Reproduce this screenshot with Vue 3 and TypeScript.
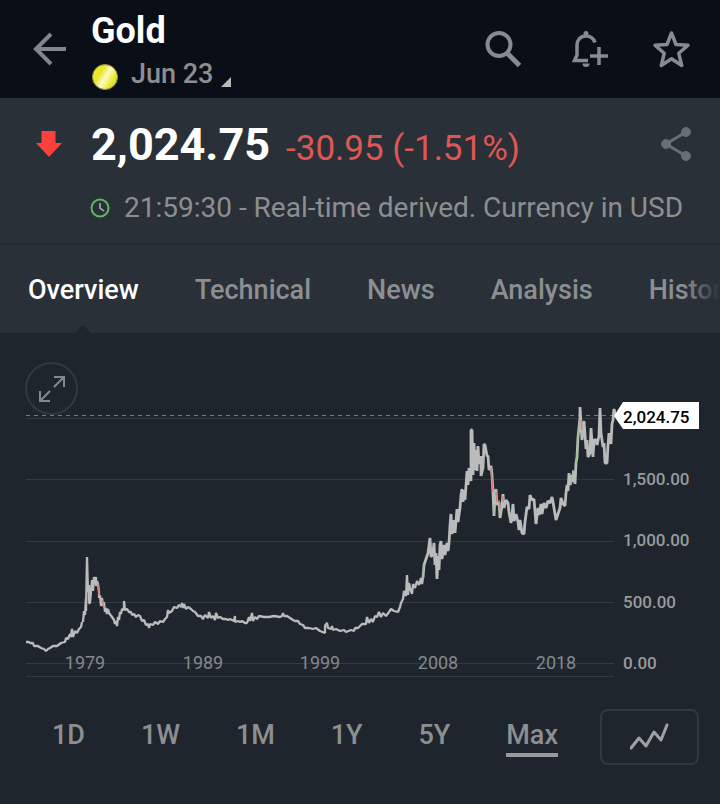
<script setup lang="ts">
import { ref } from 'vue'

const tabs = ['Overview', 'Technical', 'News', 'Analysis', 'Historical']
const activeTab = ref('Overview')

const ranges = ['1D', '1W', '1M', '1Y', '5Y', 'Max']
const activeRange = ref('Max')

const gridLines = [418, 479, 541, 602, 663, 676]
const priceLabels = [
  { y: 485, text: '1,500.00' },
  { y: 546, text: '1,000.00' },
  { y: 608, text: '500.00' },
  { y: 669, text: '0.00' },
]
const yearLabels = [
  { x: 85, text: '1979' },
  { x: 203, text: '1989' },
  { x: 320, text: '1999' },
  { x: 438, text: '2008' },
  { x: 556, text: '2018' },
]

const earlyPrices =
  '26,642 29,642 30,643 33,643 34,646 38,646 41,648 44,649 46,651 48,649 50,648 53,646 57,646 61,643 65,642 66,638 68,639 70,634 71,637 72,629 73,637 75,631 77,633 79,629 81,627 82,622'
const spikePrices =
  '83,622 84,611 85,615 86,598 86,611 87,557 88,592 89,585 89,603 90,603 92,580 93,591 94,577 95,584 96,577 96,586 97,581 98,584 99,592 99,598 100,595 101,606 102,598 103,606 104,602 105,612 106,608 107,614 108,609 109,613 112,617 114,620 115,624 116,621 117,626 118,617 119,620 120,612 121,614 122,609 124,610 124,601 125,610 127,609 129,612 131,612 132,615 134,614 136,617 138,615 140,616 142,621 144,620 146,625 148,624 149,628 150,624 153,625 155,622 158,624 160,621 163,622 165,619 167,617 168,610 169,613 172,611 174,607 177,608 179,605 181,607 182,603 183,608 184,604 186,609 188,607 191,609 193,611 195,612 198,616 201,616 203,619 205,615 208,618 209,612 211,618 213,616 215,620 216,613 218,618 220,617 223,619 226,619 228,620 230,619 234,621 235,616 235,622 238,621 240,622 242,621 245,623 247,623 249,617 250,621 252,613 253,621 255,617 257,619 259,616 264,617 269,617 274,616 280,617 282,616 283,613 284,616 287,616 290,618 293,620 295,621 298,621 300,624 303,625 305,628 309,628 313,629 316,628 320,631 325,633 325,626 327,623 328,628 331,629 332,626 333,630 336,629 340,631 344,630 346,632 351,630 354,631 355,628 358,628 362,624 366,624 367,617 369,623 371,619 373,622 375,616 377,617 379,612 381,617 383,613 386,616 389,612 391,609 394,611 398,612 400,607 401,603 403,599 404,591 406,596 407,575 408,595 409,583 410,588 412,594 413,584 415,588 417,581 419,585 421,578 422,584 423,578'
const latePrices =
  '423,578 424,565 426,559 428,553 430,538 431,557 433,553 434,543 435,565 436,553 437,579 438,556 439,570 440,545 441,541 442,559 444,545 445,555 447,543 448,551 449,543 450,525 451,514 452,534 454,520 455,533 457,509 458,522 460,508 461,495 462,489 463,502 464,490 465,500 467,471 468,485 469,468 471,481 471,430 472,430 473,475 474,443 475,470 476,450 477,471 478,446 479,464 481,456 481,476 483,468 484,444 485,445 487,456 488,456 489,470 491,466 492,475 493,493 494,516 495,494 496,489 497,505 499,502 500,518 502,506 503,494 504,508 506,500 508,503 509,512 511,523 512,515 513,504 514,521 516,514 518,522 519,530 520,520 522,533 524,534 525,522 527,507 529,509 530,495 532,500 534,499 536,524 538,508 539,515 541,504 542,514 544,503 546,508 548,501 550,503 552,497 553,502 555,514 556,520 558,514 560,508 561,498 563,504 565,506 566,493 567,485 568,491 569,473 570,485 571,475 572,482 574,471 575,484 576,463 577,457 578,437 580,418 580,407 581,424 582,440 583,430 584,421 586,449 587,440 588,457 590,453 591,428 592,442 593,457 594,440 596,440 597,445 599,436 600,408 601,433 603,447 604,443 605,463 607,463 608,445 609,433 611,444 612,424 613,420 614,409 616,417'
const risePoints = ['423,578 424,565', '494,504 494,514', '500,508 500,516', '571,485 573,470', '576,465 578,440 580,420']
const fallPoints = ['98,584 99,596', '102,600 104,608', '491,468 493,492', '496,491 497,502', '499,500 500,509', '503,496 503,502', '581,420 582,430']
</script>

<template>
  <div class="screen">
    <header class="topbar">
      <button class="icon-button back" type="button" aria-label="Back">
        <svg width="36" height="36" viewBox="0 0 36 36" fill="none" stroke="#80868d" stroke-width="4">
          <path d="M34 18H4M19 3 4 18l15 15" />
        </svg>
      </button>
      <div class="title">
        <h1>Gold</h1>
        <button class="contract" type="button">
          <svg width="28" height="28" viewBox="0 0 28 28">
            <defs>
              <linearGradient id="coin" x1="0" y1="0.2" x2="1" y2="0.8">
                <stop offset="0" stop-color="#f0ec2a" />
                <stop offset="0.3" stop-color="#e8e52c" />
                <stop offset="0.52" stop-color="#fcfbc8" />
                <stop offset="0.75" stop-color="#eeec3a" />
                <stop offset="1" stop-color="#cfca28" />
              </linearGradient>
            </defs>
            <circle cx="14" cy="14" r="12.5" fill="url(#coin)" stroke="#8d8d52" />
          </svg>
          <span>Jun 23</span>
          <svg class="corner" width="12" height="12" viewBox="0 0 12 12"><path d="M11 1v10H1z" fill="#b9bab9" /></svg>
        </button>
      </div>
      <nav class="actions">
        <button class="icon-button" type="button" aria-label="Search">
          <svg width="40" height="40" viewBox="0 0 40 40" fill="none" stroke="#868b92" stroke-width="4">
            <circle cx="15" cy="15.500" r="11.500" />
            <path d="M23.500 24.500l12 12" stroke-width="5" />
          </svg>
        </button>
        <button class="icon-button" type="button" aria-label="Create alert">
          <svg width="40" height="40" viewBox="0 0 40 40" fill="none" stroke="#868b92" stroke-width="3.500">
            <path d="M27 13.500c-1.500-4-5-6.500-9-6.500-5.500 0-9 4-9 9v10l-2.500 5.500H20" />
            <circle cx="18" cy="4.500" r="2.500" fill="#868b92" stroke="none" />
            <path d="M14.500 34.500h7a3.500 3.500 0 0 1-7 0z" fill="#868b92" stroke="none" />
            <path d="M31 18v18M22 27h18" />
          </svg>
        </button>
        <button class="icon-button" type="button" aria-label="Add to watchlist">
          <svg width="40" height="40" viewBox="0 0 40 40" fill="none" stroke="#868b92" stroke-width="3.500" stroke-linejoin="round">
            <path d="M19.500 4l4.500 11.500 12 .800-9.200 8 2.900 12.200L19.500 29.800 9.300 36.500l2.900-12.200-9.200-8 12-.800z" />
          </svg>
        </button>
      </nav>
    </header>

    <section class="quote">
      <svg class="direction" width="28" height="28" viewBox="0 0 28 28"><path d="M6.500 1h14v12H27L14 27 1 13h5.500z" fill="#fb413d" /></svg>
      <div class="price-row">
        <strong class="price">2,024.75</strong>
        <span class="change">-30.95 (-1.51%)</span>
      </div>
      <button class="icon-button share" type="button" aria-label="Share">
        <svg width="32" height="36" viewBox="0 0 32 36" fill="#676e75" stroke="#676e75">
          <path d="M26 6 6 18l20 12" fill="none" stroke-width="3" />
          <circle cx="26" cy="6" r="4.500" /><circle cx="6" cy="18" r="4.500" /><circle cx="26" cy="30" r="4.500" />
        </svg>
      </button>
      <p class="status">
        <svg width="20" height="20" viewBox="0 0 20 20" fill="none">
          <circle cx="10" cy="10" r="8.500" stroke="#5cb85c" stroke-width="2" />
          <path d="M10 5v5l4 3" stroke="#b5b0bd" stroke-width="1.500" />
        </svg>
        <span>21:59:30 - Real-time derived. Currency in USD</span>
      </p>
    </section>

    <nav class="tabs">
      <button
        v-for="tab in tabs"
        :key="tab"
        type="button"
        :class="{ active: tab === activeTab }"
        @click="activeTab = tab"
      >{{ tab }}</button>
    </nav>

    <main>
      <section class="chart">
        <button class="expand" type="button" aria-label="Expand chart">
          <svg width="28" height="28" viewBox="0 0 28 28" fill="none" stroke="#85898a" stroke-width="2">
            <path d="M16 2h10v10M26 2 16 12M2 16v10h10M2 26l10-10" />
          </svg>
        </button>
        <svg class="plot" viewBox="0 333 720 352" role="img" aria-label="Gold price history">
          <path v-for="y in gridLines" :key="y" class="grid" :d="`M26 ${y}.5H614`" />
          <path class="current" d="M26 415.500H614" />
          <text v-for="label in yearLabels" :key="label.text" class="year" :x="label.x" y="669">{{ label.text }}</text>
          <polyline class="series" :points="earlyPrices" />
          <polyline class="series" :points="spikePrices" />
          <polyline class="series thick" :points="latePrices" />
          <polyline v-for="points in risePoints" :key="points" class="rise" :points="points" />
          <polyline v-for="points in fallPoints" :key="points" class="fall" :points="points" />
          <text v-for="label in priceLabels" :key="label.text" class="value" x="623" :y="label.y">{{ label.text }}</text>
          <path d="M614 416l9-14h76v27h-76z" fill="#fff" />
          <text class="value last" x="623" y="423">2,024.75</text>
        </svg>
      </section>

      <section class="ranges">
        <div class="range-list">
          <button
            v-for="range in ranges"
            :key="range"
            type="button"
            :class="{ active: range === activeRange }"
            @click="activeRange = range"
          >{{ range }}</button>
        </div>
        <button class="chart-type" type="button" aria-label="Chart type">
          <svg width="40" height="28" viewBox="0 0 40 28" fill="none" stroke="#a0a2a2" stroke-width="3" stroke-linecap="round" stroke-linejoin="round">
            <path d="M1 25l8-10 7 8 8-14 7 8L37 2" />
          </svg>
        </button>
      </section>
    </main>
  </div>
</template>

<style>
body {
  background: #1e252c;
}
</style>

<style scoped>
.screen {
  min-height: 100vh;
  overflow: hidden;
  background: #1e252c;
  color: #8c8f90;
  font-family: Roboto, sans-serif;
}

button {
  padding: 0;
  border: 0;
  background: none;
  color: inherit;
  font: inherit;
  cursor: pointer;
}

svg {
  display: block;
  flex: none;
}

.topbar {
  display: flex;
  align-items: center;
  height: 98px;
  padding: 0 28px 0 32px;
  background: #0a0e16;
}

.back {
  width: 59px;
}

.title {
  flex: 1;
  padding-top: 6px;
}

h1 {
  margin: 0 0 4px;
  color: #fff;
  font-size: 36px;
  font-weight: 700;
  line-height: 46px;
}

.contract {
  display: flex;
  align-items: center;
  gap: 12px;
  font-size: 27px;
  font-weight: 500;
  line-height: 44px;
}

.contract span {
  margin-top: -6px;
}

.corner {
  align-self: flex-end;
  margin: 0 0 8px -5px;
}

.actions {
  display: flex;
  gap: 44px;
}

.quote {
  display: grid;
  grid-template-columns: 59px 1fr auto;
  align-items: center;
  padding: 17px 28px 15px 32px;
  border-bottom: 2px solid #20272e;
  background: #2a3038;
}

.direction {
  margin-left: 3px;
}

.direction,
.share {
  margin-bottom: 6px;
}

.price-row {
  display: flex;
  align-items: baseline;
  gap: 16px;
  line-height: 60px;
  white-space: nowrap;
}

.price {
  color: #fff;
  font-size: 45px;
  font-weight: 700;
}

.change {
  color: #df5753;
  font-size: 35px;
}

.status {
  grid-column: 2 / 4;
  display: flex;
  align-items: center;
  gap: 14px;
  margin: 9px 0 0 -1px;
  font-size: 28px;
  line-height: 40px;
  white-space: nowrap;
}

.tabs {
  position: relative;
  display: flex;
  gap: 56px;
  padding: 2px 0 0 28px;
  overflow: hidden;
  background: #2a3038;
  font-size: 27px;
  font-weight: 500;
  line-height: 86px;
  white-space: nowrap;
}

.tabs::after {
  content: '';
  position: absolute;
  inset: 0 0 0 auto;
  width: 36px;
  background: linear-gradient(to right, #2a303800, #2a3038);
}

.tabs button {
  flex: none;
  position: relative;
}

.tabs .active {
  color: #fff;
}

.tabs .active::after {
  content: '';
  position: absolute;
  bottom: 0;
  left: 50%;
  margin-left: -8px;
  border: 8px solid transparent;
  border-top: 0;
  border-bottom-color: #1e252c;
}

.chart {
  position: relative;
}

.expand {
  position: absolute;
  top: 29px;
  left: 25px;
  display: grid;
  place-items: center;
  width: 53px;
  height: 53px;
  border: 2px solid #333940;
  border-radius: 50%;
}

.plot {
  width: 100%;
}

.grid {
  stroke: #2e3b42;
}

.current {
  stroke: #747b7e;
  stroke-dasharray: 4 4;
}

.series {
  fill: none;
  stroke: #babbbb;
  stroke-width: 2.3;
  stroke-linejoin: bevel;
}

.thick {
  stroke-width: 2.8;
}

.rise,
.fall {
  fill: none;
  stroke: #96c48f;
  stroke-width: 1.3;
}

.fall {
  stroke: #dc7777;
}

.year,
.value {
  fill: #858a8c;
  font-size: 18px;
}

.year {
  text-anchor: middle;
}

.value {
  fill: #979b9c;
  font-size: 17px;
  font-weight: 500;
}

.last {
  fill: #000;
}

.ranges {
  display: flex;
  align-items: center;
  padding: 24px 21px 40px 52px;
}

.range-list {
  flex: 1;
  display: flex;
  justify-content: space-between;
  margin-right: 42px;
  font-size: 27px;
  font-weight: 500;
  line-height: 36px;
}

.range-list button {
  border-bottom: 4px solid transparent;
}

.range-list .active {
  border-color: #97999a;
}

.chart-type {
  display: grid;
  place-items: center;
  width: 99px;
  height: 56px;
  border: 2px solid #333940;
  border-radius: 8px;
}
</style>
